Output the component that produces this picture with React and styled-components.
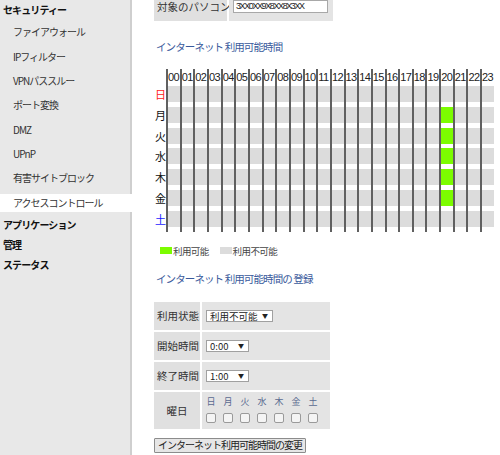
import React from "react";
import styled, { createGlobalStyle } from "styled-components";

const GlobalStyle = createGlobalStyle`
  html, body {
    margin: 0;
    padding: 0;
    background: #ffffff;
  }
  body {
    font-family: "Noto Sans CJK JP", "Liberation Sans", sans-serif;
    color: #222;
  }
`;

const HOURS = Array.from({ length: 24 }, (_, i) => String(i).padStart(2, "0"));
const DAYS = [
  { label: "日", color: "#ff2020" },
  { label: "月", color: "#111" },
  { label: "火", color: "#111" },
  { label: "水", color: "#111" },
  { label: "木", color: "#111" },
  { label: "金", color: "#111" },
  { label: "土", color: "#1a1aff" },
];
// hours that are available, per day index
const AVAILABLE = { 1: [20], 2: [20], 3: [20], 4: [20], 5: [20] };

const MENU = [
  { label: "ファイアウォール" },
  { label: "IPフィルター" },
  { label: "VPNパススルー" },
  { label: "ポート変換" },
  { label: "DMZ" },
  { label: "UPnP" },
  { label: "有害サイトブロック" },
  { label: "アクセスコントロール", active: true },
];

export default function App() {
  return (
    <>
      <GlobalStyle />
      <Page>
        <Sidebar>
          <NavHead>セキュリティー</NavHead>
          {MENU.map((m) => (
            <NavItem key={m.label} $active={m.active}>
              {m.label}
            </NavItem>
          ))}
          <NavHead>アプリケーション</NavHead>
          <NavHead>管理</NavHead>
          <NavHead>ステータス</NavHead>
        </Sidebar>

        <Main>
          <InfoTable>
            <LabelCell>対象のパソコン</LabelCell>
            <ValueCell>
              <TextBox>3XX0XX9X8XX8X3XX</TextBox>
            </ValueCell>
          </InfoTable>

          <SectionTitle $top={19}>インターネット 利用可能時間</SectionTitle>

          <Schedule>
            <DayLabel />
            {HOURS.map((h) => (
              <HourCell key={h}>{h}</HourCell>
            ))}
            {DAYS.map((d, di) => (
              <React.Fragment key={d.label}>
                <DayLabel $color={d.color}>{d.label}</DayLabel>
                {HOURS.map((h, hi) => (
                  <SlotCell key={h}>
                    <Fill $on={(AVAILABLE[di] || []).includes(hi)} />
                  </SlotCell>
                ))}
              </React.Fragment>
            ))}
          </Schedule>

          <Legend>
            <LegendItem>
              <Swatch $color="#7cfc00" />
              利用可能
            </LegendItem>
            <LegendItem>
              <Swatch $color="#dcdcdc" />
              利用不可能
            </LegendItem>
          </Legend>

          <SectionTitle $top={15}>インターネット 利用可能時間の 登録</SectionTitle>

          <FormTable>
            <LabelCell>利用状態</LabelCell>
            <ValueCell>
              <Select $width={67}>
                利用不可能 <Arrow>▼</Arrow>
              </Select>
            </ValueCell>
            <LabelCell>開始時間</LabelCell>
            <ValueCell>
              <Select $width={43}>
                0:00 <Arrow>▼</Arrow>
              </Select>
            </ValueCell>
            <LabelCell>終了時間</LabelCell>
            <ValueCell>
              <Select $width={43}>
                1:00 <Arrow>▼</Arrow>
              </Select>
            </ValueCell>
            <LabelCell $center>曜日</LabelCell>
            <ValueCell>
              <WeekGrid>
                {DAYS.map((d) => (
                  <WeekLabel key={d.label}>{d.label}</WeekLabel>
                ))}
                {DAYS.map((d) => (
                  <Check key={d.label} />
                ))}
              </WeekGrid>
            </ValueCell>
          </FormTable>

          <Button>インターネット利用可能時間の変更</Button>
        </Main>
      </Page>
    </>
  );
}

const Page = styled.div`
  display: flex;
  width: 500px;
  height: 455px;
  overflow: hidden;
`;

const Sidebar = styled.nav`
  width: 130px;
  flex-shrink: 0;
  background: #e8e8e8;
  border-right: 2px solid #cfcfcf;
  display: flex;
  flex-direction: column;
`;

const NavHead = styled.div`
  height: 20px;
  line-height: 20px;
  padding-left: 3px;
  font-size: 10px;
  font-weight: bold;
  letter-spacing: -0.9px;
  color: #111;
`;

const NavItem = styled.div`
  height: 18px;
  line-height: 18px;
  margin: 3.2px 0;
  margin-right: ${(p) => (p.$active ? "-2px" : "0")};
  padding-left: 13px;
  font-size: 10px;
  letter-spacing: -1px;
  color: #333;
  background: ${(p) => (p.$active ? "#ffffff" : "transparent")};
`;

const Main = styled.main`
  flex: 1;
  padding-left: 22px;
  margin-top: -9px;
`;

const InfoTable = styled.div`
  display: grid;
  grid-template-columns: 73px 104px;
  column-gap: 2px;
  height: 30px;
  width: 179px;
`;

const LabelCell = styled.div`
  background: #e0e0e0;
  display: flex;
  align-items: center;
  justify-content: ${(p) => (p.$center ? "center" : "flex-start")};
  padding-left: ${(p) => (p.$center ? "0" : "3px")};
  font-size: 10.5px;
  color: #333;
  white-space: nowrap;
`;

const ValueCell = styled.div`
  background: #e4e4e4;
  display: flex;
  align-items: center;
  padding-left: 4px;
`;

const TextBox = styled.div`
  width: 95px;
  height: 13px;
  margin-top: 1px;
  box-sizing: border-box;
  background: #fff;
  border: 1px solid #a8a8a8;
  font-family: "Liberation Sans", sans-serif;
  font-size: 9px;
  line-height: 11px;
  letter-spacing: -1.4px;
  padding-left: 2px;
  color: #222;
  overflow: hidden;
  white-space: nowrap;
`;

const SectionTitle = styled.h2`
  margin: ${(p) => p.$top}px 0 0 2px;
  font-size: 10.5px;
  font-weight: normal;
  line-height: 14px;
  letter-spacing: -0.9px;
  color: #3a5a9c;
`;

const Schedule = styled.div`
  display: grid;
  grid-template-columns: 12px repeat(24, 13.67px);
  grid-auto-rows: 20.8px;
  grid-template-rows: 17px;
  margin-top: 15px;
`;

const HourCell = styled.div`
  border-left: 2px solid #606060;
  font-family: "Liberation Sans", sans-serif;
  font-size: 11px;
  letter-spacing: -0.6px;
  line-height: 17px;
  white-space: nowrap;
  overflow: hidden;
  color: #222;
`;

const DayLabel = styled.div`
  font-size: 11px;
  line-height: 16px;
  padding-left: 1px;
  color: ${(p) => p.$color || "#111"};
`;

const SlotCell = styled.div`
  border-left: 2px solid #606060;
`;

const Fill = styled.div`
  height: 16px;
  background: ${(p) => (p.$on ? "#7cfc00" : "#dcdcdc")};
`;

const Legend = styled.div`
  display: flex;
  gap: 11px;
  margin: 13px 0 0 6px;
`;

const LegendItem = styled.div`
  display: flex;
  align-items: center;
  font-size: 9.5px;
  line-height: 12px;
  letter-spacing: -0.6px;
  color: #444;
`;

const Swatch = styled.span`
  width: 12px;
  height: 7px;
  background: ${(p) => p.$color};
  margin-right: 1px;
`;

const FormTable = styled.div`
  display: grid;
  grid-template-columns: 46px 128px;
  grid-template-rows: 28px 28px 28px 37px;
  gap: 2px;
  width: 176px;
  margin-top: 16px;
`;

const Select = styled.div`
  width: ${(p) => p.$width}px;
  height: 12px;
  box-sizing: border-box;
  background: #fff;
  border: 1px solid #a0a0a0;
  display: flex;
  align-items: center;
  justify-content: space-between;
  padding: 0 4px 0 3px;
  font-size: 9.5px;
  line-height: 10px;
  color: #222;
  white-space: nowrap;
`;

const Arrow = styled.span`
  font-size: 6px;
  color: #222;
`;

const WeekGrid = styled.div`
  display: grid;
  grid-template-columns: repeat(7, 10px);
  column-gap: 7px;
  row-gap: 7px;
`;

const WeekLabel = styled.span`
  font-size: 9px;
  line-height: 9px;
  text-align: center;
  color: #5a6a90;
`;

const Check = styled.span`
  width: 10px;
  height: 10px;
  box-sizing: border-box;
  border: 1px solid #9a9a9a;
  border-radius: 2px;
  background: #f4f4f4;
`;

const Button = styled.button`
  display: block;
  margin-top: 9px;
  height: 15px;
  padding: 0 3px;
  background: #e6e6e6;
  border: 1px solid #8c8c8c;
  border-radius: 1px;
  font-family: "Noto Sans CJK JP", sans-serif;
  font-size: 10px;
  line-height: 12px;
  letter-spacing: -1px;
  color: #222;
`;
